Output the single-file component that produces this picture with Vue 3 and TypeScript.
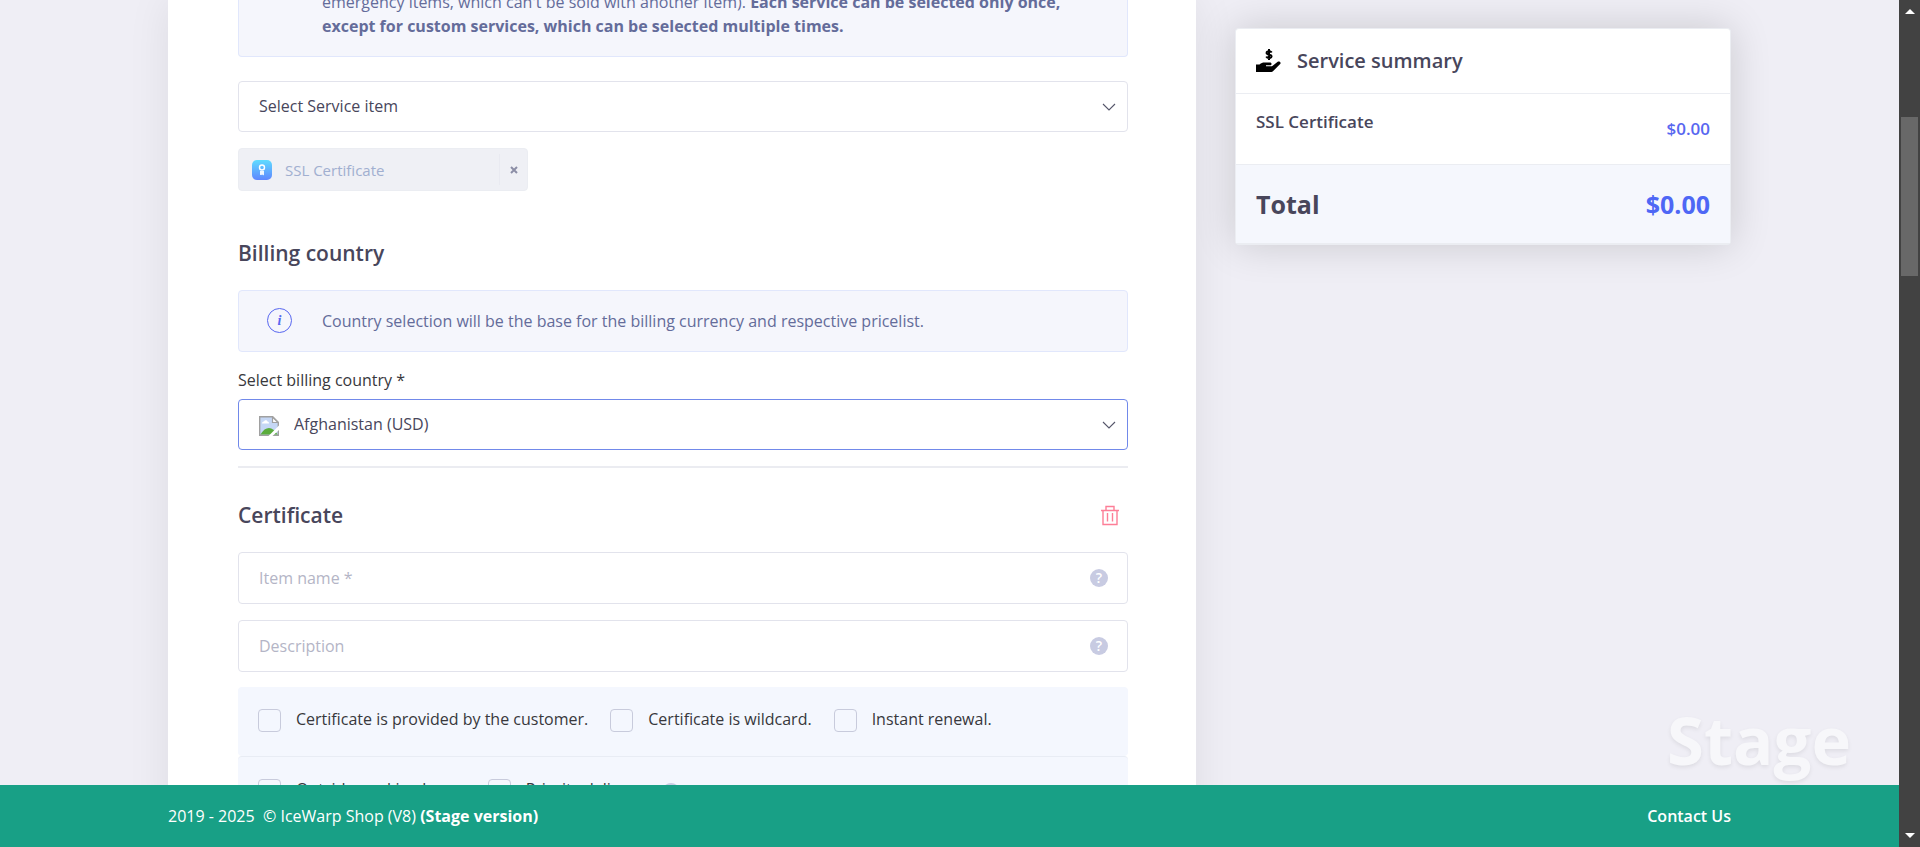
<script setup lang="ts">
import { ref } from 'vue'

interface Option {
  id: string
  label: string
  help?: boolean
}

const service = ref('')
const country = ref('AF')
const itemName = ref('')
const description = ref('')
const checked = ref<string[]>([])

const optionRows: Option[][] = [
  [
    { id: 'provided', label: 'Certificate is provided by the customer.' },
    { id: 'wildcard', label: 'Certificate is wildcard.' },
    { id: 'renewal', label: 'Instant renewal.' },
  ],
  [
    { id: 'outside', label: 'Outside working hours' },
    { id: 'priority', label: 'Priority delivery', help: true },
  ],
]
</script>

<template>
  <div class="window">
    <div class="page">
      <div class="content">
        <main class="card">
          <div class="notice notice-first">
            <p>
              emergency items, which can't be sold with another item).
              <strong>Each service can be selected only once, except for custom services, which can be selected multiple times.</strong>
            </p>
          </div>

          <div class="select-wrap service-select">
            <select v-model="service" class="field" aria-label="Select Service item">
              <option value="">Select Service item</option>
            </select>
            <svg class="chevron" viewBox="0 0 14 8"><path d="M1 1l6 6 6-6" /></svg>
          </div>

          <div class="tag">
            <svg class="tag-icon" viewBox="0 0 20 20">
              <defs>
                <linearGradient id="tag-fill" x1="0" y1="0" x2="0" y2="1">
                  <stop offset="0" stop-color="#5fdcff" />
                  <stop offset="1" stop-color="#5f86ff" />
                </linearGradient>
              </defs>
              <rect width="20" height="20" rx="5" fill="url(#tag-fill)" />
              <circle cx="10" cy="7.5" r="2.500" fill="none" stroke="#fff" stroke-width="1.400" />
              <path d="M8 11h4v4.500l-1.300-1-.7.8-.6-.6L8 15z" fill="#fff" opacity=".9" />
            </svg>
            <span class="tag-label">SSL Certificate</span>
            <button class="tag-remove" type="button" aria-label="Remove SSL Certificate">
              <svg viewBox="0 0 8 8"><path d="M1 1l6 6M7 1L1 7" /></svg>
            </button>
          </div>

          <h2 class="billing-title">Billing country</h2>
          <div class="notice">
            <span class="info-icon">i</span>
            <p>Country selection will be the base for the billing currency and respective pricelist.</p>
          </div>

          <label class="field-label" for="country">Select billing country *</label>
          <div class="select-wrap">
            <select id="country" v-model="country" class="field country">
              <option value="AF">Afghanistan (USD)</option>
            </select>
            <svg class="flag" viewBox="0 0 20 20">
              <path d="M.7.7h13l5.600 5.600v13H.7z" fill="#c5d7f5" stroke="#a0a0a0" stroke-width="1.400" />
              <path d="M13.500 1v5.500H19z" fill="#fff" stroke="#a0a0a0" stroke-width="1.200" />
              <path d="M3 7.500c0-1.500 1.200-2 2-2 .6-1.700 3-1.700 3.500 0 1 0 1.500.8 1.500 2z" fill="#fff" />
              <path d="M1.400 18.600C4 14 7 12 10 12c3 0 6 2.500 8.600 6.600z" fill="#5aac3c" />
              <path d="M20 9.500L9.500 20H13.500L20 14z" fill="#fff" />
            </svg>
            <svg class="chevron" viewBox="0 0 14 8"><path d="M1 1l6 6 6-6" /></svg>
          </div>

          <hr />

          <div class="section-head">
            <h2>Certificate</h2>
            <button class="trash" type="button" aria-label="Delete certificate">
              <svg viewBox="0 0 18 21">
                <path d="M0 5.500h18M5 5V1.500h8V5M2 5.500v14h14v-14M6.500 8v8.500M11.500 8v8.500" />
              </svg>
            </button>
          </div>

          <div class="inputs">
            <div class="input-wrap">
              <input v-model="itemName" class="field" type="text" placeholder="Item name *" aria-label="Item name" />
              <button class="help" type="button" aria-label="Item name help">?</button>
            </div>
            <div class="input-wrap">
              <input v-model="description" class="field" type="text" placeholder="Description" aria-label="Description" />
              <button class="help" type="button" aria-label="Description help">?</button>
            </div>
          </div>

          <div class="options">
            <div v-for="(row, index) in optionRows" :key="index" class="option-row">
              <div v-for="option in row" :key="option.id" class="option">
                <input :id="option.id" v-model="checked" type="checkbox" :value="option.id" />
                <label :for="option.id">{{ option.label }}</label>
                <button v-if="option.help" class="help" type="button" aria-label="Priority delivery help">?</button>
              </div>
            </div>
          </div>
        </main>

        <aside class="summary">
          <header>
            <svg class="hand" viewBox="0 0 25 24">
              <path d="M0 15.500h3.500c1.800-1.400 3-1.900 5-1.900h5.500c2 0 2 2.700 0 2.700h-4v.9h6l5.400-4.300c1.700-1.200 4.200.5 2.800 2.100l-6.500 6.500c-1 1-1.800 1.500-3.200 1.500H0z" />
              <path d="M15.700 3.600c-.6-1-1.500-1.300-2.700-1.300-1.300 0-2.400.6-2.400 1.700 0 2.200 5 1.100 5 3.300 0 1-1 1.700-2.500 1.700-1.300 0-2.300-.5-2.800-1.500M13 0v11" fill="none" stroke="#000" stroke-width="2" />
            </svg>
            <h3>Service summary</h3>
          </header>
          <div class="summary-row">
            <span>SSL Certificate</span>
            <span class="price">$0.00</span>
          </div>
          <div class="total">
            <span>Total</span>
            <span class="amount">$0.00</span>
          </div>
        </aside>
      </div>

      <div class="watermark">Stage</div>

      <footer>
        <span>2019 - 2025&nbsp; © IceWarp Shop (V8) <b>(Stage version)</b></span>
        <a href="#contact">Contact Us</a>
      </footer>
    </div>

    <div class="scrollbar" aria-hidden="true">
      <svg viewBox="0 0 10 5"><path d="M0 5l5-5 5 5z" /></svg>
      <div class="track"><div class="thumb"></div></div>
      <svg viewBox="0 0 10 5"><path d="M0 0l5 5 5-5z" /></svg>
    </div>
  </div>
</template>

<style>
body {
  margin: 0;
  background: #efeef5;
}
</style>

<style scoped>
.window {
  display: flex;
  height: 100vh;
  overflow: hidden;
  font-family: "Open Sans", "Noto Sans", sans-serif;
  font-size: 16px;
  line-height: 24px;
  color: #38383c;
}
.window *,
.window *::before {
  box-sizing: border-box;
}
.page {
  position: relative;
  flex: 1;
  min-width: 0;
  display: flex;
  flex-direction: column;
}
.content {
  flex: 1;
  min-height: 0;
  overflow: hidden;
  display: grid;
  grid-template-columns: 1028fr 496fr;
  column-gap: 39px;
  padding: 0 168px;
  align-items: start;
}
.card {
  background: #fff;
  padding: 0 68px 0 70px;
  box-shadow: 0 0 40px rgba(0, 0, 0, 0.08);
}
h2,
h3,
p {
  margin: 0;
}
.notice {
  display: flex;
  align-items: center;
  min-height: 62px;
  padding: 17px 40px 18px 28px;
  border: 1px solid #e1e7fc;
  border-radius: 4px;
  background: #f5f6fc;
  color: #646c9a;
}
.notice-first {
  margin-top: -10px;
  padding-top: 0;
  padding-left: 83px;
  border-top: 0;
  border-radius: 0 0 4px 4px;
}
strong,
b {
  font-weight: 700;
}
.info-icon {
  width: 25px;
  height: 25px;
  margin-right: 30px;
  border: 1px solid #5867f0;
  border-radius: 50%;
  color: #5867f0;
  font: italic bold 14px/23px "Liberation Serif", serif;
  text-align: center;
}
.select-wrap,
.input-wrap {
  position: relative;
}
.service-select {
  margin-top: 24px;
}
.field {
  display: block;
  width: 100%;
  height: 52px;
  margin: 0;
  padding: 0 20px;
  border: 1px solid #e2e3ec;
  border-radius: 4px;
  outline: 0;
  appearance: none;
  background: #fff;
  color: #48465b;
  font: inherit;
}
select.field {
  height: 51px;
  padding-bottom: 2px;
}
.field::placeholder {
  color: #b4b5c6;
  opacity: 1;
}
.field.country {
  padding-left: 55px;
  border-color: #7189ea;
}
.chevron {
  position: absolute;
  right: 12px;
  top: 22px;
  width: 14px;
  height: 8px;
  fill: none;
  stroke: #55566a;
  stroke-width: 1.1;
  pointer-events: none;
}
.flag {
  position: absolute;
  left: 21px;
  top: 17px;
  width: 20px;
  height: 20px;
}
.tag {
  display: flex;
  align-items: center;
  width: 290px;
  height: 43px;
  margin-top: 16px;
  padding-left: 13px;
  border: 1px solid #ebedf2;
  border-radius: 4px;
  background: #eff0f5;
  color: #a1afd0;
  font-size: 15px;
}
.tag-icon {
  width: 20px;
  height: 20px;
  margin-right: 13px;
}
.tag-label {
  flex: 1;
}
.tag-remove {
  display: flex;
  align-items: center;
  justify-content: center;
  width: 28px;
  height: 31px;
  padding: 0;
  border: 0;
  border-left: 1px solid #e9eaf1;
  background: none;
}
.tag-remove svg {
  width: 8px;
  height: 8px;
  stroke: #8c8ea6;
  stroke-width: 2;
}
h2 {
  font-size: 21px;
  font-weight: 600;
  line-height: 32px;
  color: #48465b;
}
.billing-title {
  margin: 46px 0 21px;
}
.field-label {
  display: block;
  margin: 16px 0 7px;
}
hr {
  height: 2px;
  margin: 16px 0 0;
  border: 0;
  background: #ebecf1;
}
.section-head {
  display: flex;
  align-items: center;
  justify-content: space-between;
  margin: 31px 0 21px;
  padding-right: 9px;
}
.trash {
  display: flex;
  padding: 0;
  border: 0;
  background: none;
}
.trash svg {
  width: 18px;
  height: 21px;
  fill: none;
  stroke: #fd7e97;
  stroke-width: 1.4;
}
.inputs {
  display: grid;
  gap: 16px;
}
.help {
  width: 18px;
  height: 18px;
  padding: 0;
  border: 0;
  border-radius: 50%;
  background: #c8cbe2;
  color: #fff;
  font: 600 14px/18px "Open Sans", sans-serif;
  text-align: center;
}
.input-wrap .help {
  position: absolute;
  right: 20px;
  top: 17px;
}
.options {
  margin-top: 15px;
}
.option-row {
  display: flex;
  gap: 22px;
  height: 69px;
  padding: 20px 20px 0;
  border-radius: 4px;
  background: #f4f7fe;
}
.option-row + .option-row {
  border-top: 1px solid #e8ecf4;
}
.option {
  display: flex;
  align-items: flex-start;
}
.option input {
  width: 23px;
  height: 23px;
  margin: 2px 15px 0 0;
  border: 1px solid #c8cbdc;
  border-radius: 4px;
  appearance: none;
}
.option .help {
  margin: 6px 0 0 20px;
}
.summary {
  margin-top: 28px;
  border: 1px solid #ebedf2;
  border-bottom-width: 2px;
  border-radius: 4px;
  background: #fff;
  box-shadow: 0 0 40px rgba(0, 0, 0, 0.16);
  color: #48465b;
}
.summary header {
  display: flex;
  align-items: center;
  gap: 16px;
  height: 65px;
  padding: 0 20px;
  border-bottom: 1px solid #ebedf2;
}
.hand {
  width: 25px;
  height: 24px;
}
h3 {
  font-size: 20px;
  font-weight: 600;
  line-height: 28px;
}
.summary-row {
  display: flex;
  justify-content: space-between;
  height: 71px;
  padding: 16px 20px;
  border-bottom: 1px solid #ebedf2;
  font-size: 17px;
  font-weight: 600;
}
.price {
  align-self: flex-end;
  margin-bottom: 7px;
  color: #5867f0;
}
.total {
  display: flex;
  align-items: center;
  justify-content: space-between;
  height: 78px;
  padding: 0 20px;
  background: #f5f7fd;
  font-size: 25px;
  font-weight: 700;
}
.amount {
  color: #4e67f5;
}
.watermark {
  position: absolute;
  right: 48px;
  bottom: 64px;
  color: #f7f7fa;
  font-size: 67px;
  font-weight: 700;
  line-height: 88px;
  text-shadow: 0 2px 4px rgba(0, 0, 0, 0.08);
}
footer {
  display: flex;
  align-items: center;
  justify-content: space-between;
  height: 62px;
  padding: 0 168px;
  background: #18a086;
  color: #fff;
}
footer a {
  color: #fff;
  font-weight: 600;
  text-decoration: none;
}
.scrollbar {
  display: flex;
  flex-direction: column;
  align-items: center;
  width: 21px;
  padding: 9px 0;
  background: #424242;
}
.scrollbar svg {
  width: 10px;
  height: 5px;
  fill: #fff;
}
.track {
  flex: 1;
  padding-top: 103px;
}
.thumb {
  width: 17px;
  height: 159px;
  background: #686868;
}
</style>
